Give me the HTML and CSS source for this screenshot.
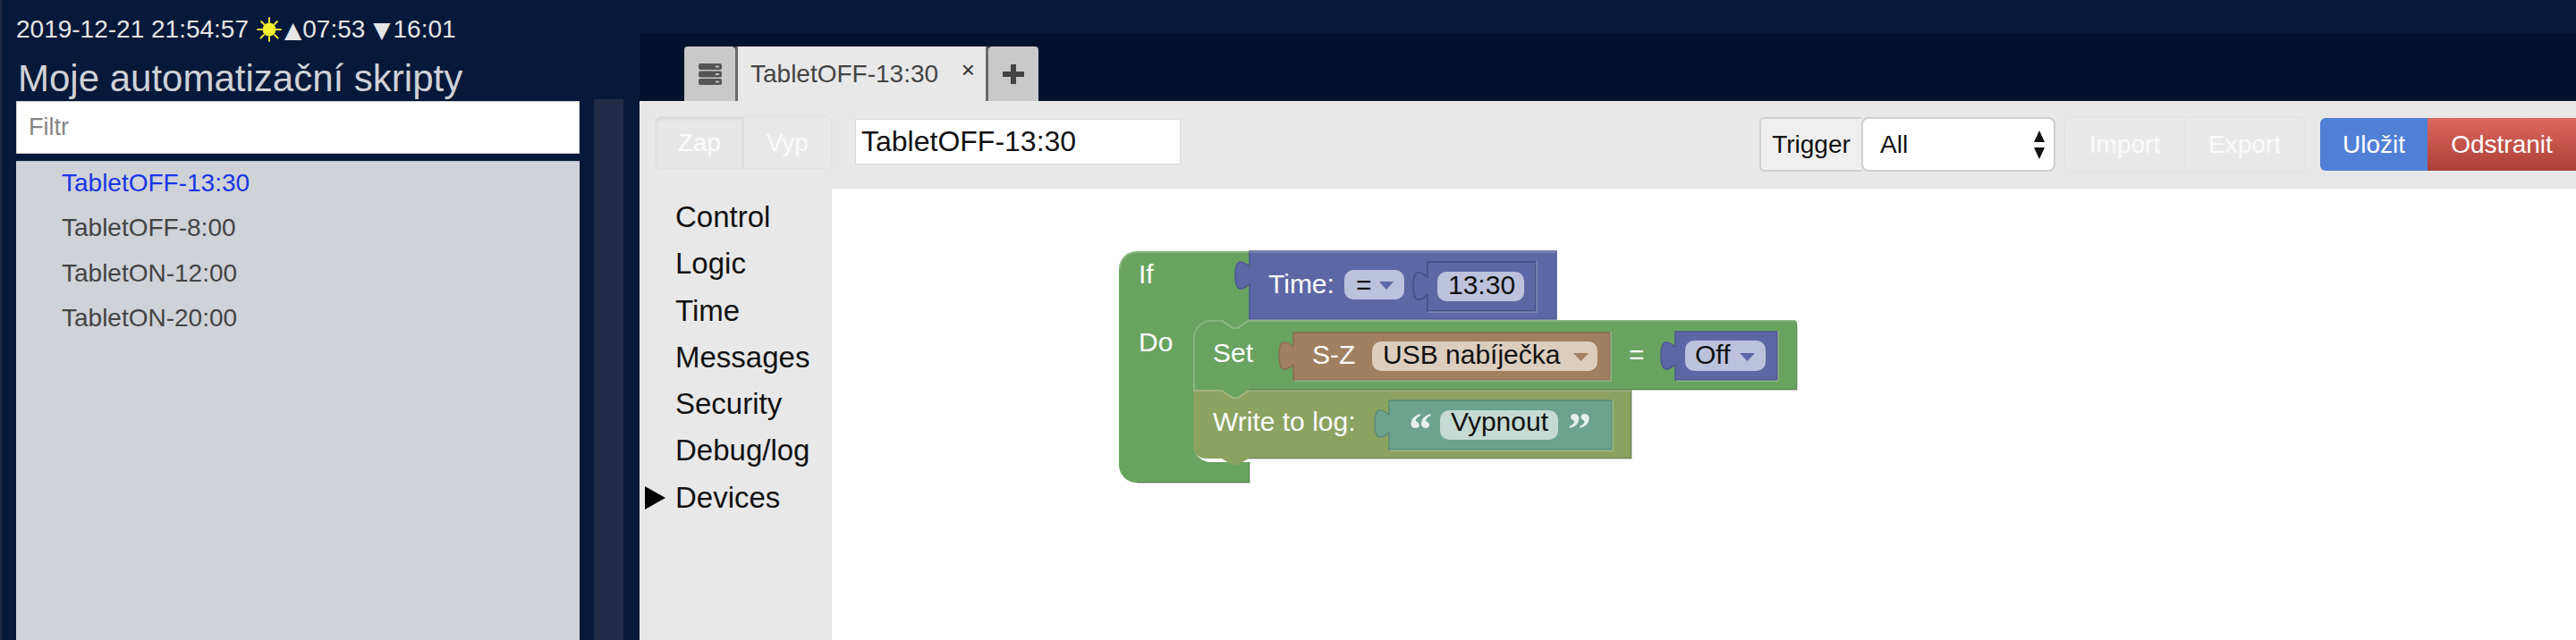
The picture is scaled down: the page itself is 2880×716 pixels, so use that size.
FILE: index.html
```html
<!DOCTYPE html>
<html lang="cs">
<head>
  <meta charset="UTF-8">
  <title>Moje automatizační skripty</title>
  <link rel="stylesheet" href="styles.css">
</head>
<body>
  <div class="app">
    <aside class="sidebar">
      <div class="status">
        <span>2019-12-21 21:54:57</span>
        <svg class="sun" width="28" height="28" viewBox="0 0 28 28">
          <g stroke="#e8e23a" stroke-width="2" stroke-linecap="round">
            <path d="M14 1v5M14 22v5M1 14h5M22 14h5M5 5l3.500 3.500M20 20l3.500 3.500M23 5l-3.500 3.500M8 20l-3.500 3.500"/>
          </g>
          <circle cx="14" cy="14" r="7.500" fill="#f4f02e"/>
        </svg>
        <span class="arrow">▲</span><span>07:53</span>
        <span class="arrow arrow-down">▼</span><span>16:01</span>
      </div>
      <h1 class="title">Moje automatizační skripty</h1>
      <input class="filter" type="text" placeholder="Filtr">
      <ul class="script-list">
        <li class="active">TabletOFF-13:30</li>
        <li>TabletOFF-8:00</li>
        <li>TabletON-12:00</li>
        <li>TabletON-20:00</li>
      </ul>
    </aside>

    <div class="splitter"></div>

    <main class="editor">
      <div class="tabs">
        <div class="tab tab-icon">
          <svg width="26" height="24" viewBox="0 0 26 24">
            <g fill="#555">
              <rect x="0" y="0" width="26" height="7" rx="2"/>
              <rect x="0" y="8.500" width="26" height="7" rx="2"/>
              <rect x="0" y="17" width="26" height="7" rx="2"/>
            </g>
            <g fill="#bbb">
              <rect x="19" y="2.500" width="4" height="2"/>
              <rect x="19" y="11" width="4" height="2"/>
              <rect x="19" y="19.500" width="4" height="2"/>
            </g>
          </svg>
        </div>
        <div class="tab tab-active">
          <span>TabletOFF-13:30</span>
          <span class="tab-close">×</span>
        </div>
        <div class="tab tab-add">
          <svg width="24" height="22" viewBox="0 0 24 22">
            <path d="M9 0h6v8h9v6h-9v8H9v-8H0V8h9z" fill="#444"/>
          </svg>
        </div>
      </div>

      <div class="panel">
        <div class="toolbar">
          <div class="btn-group onoff">
            <div class="btn-flat btn-zap">Zap</div>
            <div class="btn-flat">Vyp</div>
          </div>
          <input class="script-name" type="text" value="TabletOFF-13:30">
          <div class="toolbar-right">
            <div class="trigger">
              <div class="trigger-label">Trigger</div>
              <div class="trigger-select">
                <span>All</span>
                <svg width="12" height="32" viewBox="0 0 12 32">
                  <path d="M6 0l6 13H0zM0 19h12L6 32z" fill="#111"/>
                </svg>
              </div>
            </div>
            <div class="btn-group import-export">
              <div class="btn-flat btn-import">Import</div>
              <div class="btn-flat">Export</div>
            </div>
            <div class="actions">
              <div class="btn-save">Uložit</div>
              <div class="btn-delete">Odstranit</div>
            </div>
          </div>
        </div>

        <div class="panel-body">
          <ul class="toolbox">
            <li>Control</li>
            <li>Logic</li>
            <li>Time</li>
            <li>Messages</li>
            <li>Security</li>
            <li>Debug/log</li>
            <li class="open">Devices</li>
          </ul>
          <div class="workspace">
            <svg class="blocks" width="1950" height="506" viewBox="930 210 1950 506">
              <!-- if / do -->
              <path class="b-green" d="M1251 301a20 20 0 0 1 20-20H1397V358H1396l-12 8h-6l-12-8V380H1334V497a20 20 0 0 0 20 20H1397V540H1271a20 20 0 0 1-20-20Z"/>
              <path class="edge-light" d="M1252 301a19 19 0 0 1 19-19H1397"/>
              <path class="edge-dark" d="M1397 517V540H1271"/>
              <text class="lbl" x="1273" y="317">If</text>
              <text class="lbl" x="1273" y="393">Do</text>

              <!-- time compare -->
              <path class="b-blue" d="M1397 281H1740V357H1397V318c-3 2-7 6-11 5c-4-1-5-8-5-15s1-14 5-15c4-1 8 3 11 5V281Z"/>
              <path class="edge-light" d="M1397 282H1739"/>
              <text class="lbl" x="1418" y="328">Time:</text>
              <rect class="pill-blue" x="1503" y="302" width="67" height="33" rx="10"/>
              <text class="val" x="1516" y="329">=</text>
              <path class="tri-blue" d="M1542 315h16l-8 9z"/>
              <path class="b-blue inset" d="M1596 293H1717V348H1596V330c-3 2-7 6-11 5c-4-1-5-8-5-15s1-14 5-15c4-1 8 3 11 5V293Z"/>
              <path class="edge-light" d="M1718 292V349H1597"/>
              <rect class="pill-blue" x="1607" y="304" width="97" height="33" rx="10"/>
              <text class="val" x="1619" y="329">13:30</text>

              <!-- write to log, under the set block's bottom notch -->
              <path class="b-olive" d="M1334 436H1824V513H1396l-12 7h-6l-12-7H1348a14 14 0 0 1-14-14Z"/>
              <path class="edge-dark" d="M1824 436V513H1396"/>
              <text class="lbl" x="1356" y="482">Write to log:</text>
              <path class="b-teal" d="M1553 448H1802V503H1553V484c-3 2-7 6-11 5c-4-1-5-8-5-15s1-14 5-15c4-1 8 3 11 5V448Z"/>
              <path class="edge-light" d="M1803 447V504H1554"/>
              <text class="quote" x="1575" y="498">“</text>
              <rect class="pill-teal" x="1610" y="459" width="132" height="33" rx="10"/>
              <text class="val" x="1622" y="482">Vypnout</text>
              <text class="quote" x="1753" y="498">”</text>

              <!-- set -->
              <path class="b-green" d="M1354 358H1366l12 8h6l12-8H2005a4 4 0 0 1 4 4V436H1396l-12 8h-6l-12-8H1334V378a20 20 0 0 1 20-20Z"/>
              <path class="edge-light" d="M1335 436V378a19 19 0 0 1 19-19H1366l12 8h6l12-8H2005"/>
              <path class="edge-dark" d="M2009 362V436H1396"/>
              <path class="edge-light" d="M1334 437H1366l12 8h6l12-8H1824"/>
              <text class="lbl" x="1356" y="405">Set</text>
              <path class="b-brown" d="M1446 372H1800V425H1446V408c-3 2-7 6-11 5c-4-1-5-8-5-15s1-14 5-15c4-1 8 3 11 5V372Z"/>
              <path class="edge-light" d="M1801 371V426H1447"/>
              <text class="lbl" x="1467" y="407">S-Z</text>
              <rect class="pill-brown" x="1534" y="382" width="252" height="33" rx="10"/>
              <text class="val" x="1546" y="407">USB nabíječka</text>
              <path class="tri-brown" d="M1759 395h17l-8.500 9z"/>
              <text class="lbl" x="1821" y="407">=</text>
              <path class="b-blue" d="M1873 371H1987V425H1873V408c-3 2-7 6-11 5c-4-1-5-8-5-15s1-14 5-15c4-1 8 3 11 5V371Z"/>
              <path class="edge-light" d="M1988 370V426H1874"/>
              <rect class="pill-blue" x="1884" y="381" width="90" height="34" rx="10"/>
              <text class="val" x="1895" y="407">Off</text>
              <path class="tri-blue" d="M1945 395h17l-8.500 9z"/>
            </svg>
          </div>
        </div>
      </div>
    </main>
  </div>
</body>
</html>
```

FILE: styles.css
```css
* {
  box-sizing: border-box;
}

html, body {
  margin: 0;
  padding: 0;
  height: 716px;
  overflow: hidden;
}

body {
  font-family: "Liberation Sans", Arial, sans-serif;
  font-size: 28px;
  background-color: #07193a;
}

.app {
  display: flex;
  height: 716px;
}

/* left column */
.sidebar {
  width: 664px;
  flex: none;
  padding-left: 16px;
  padding-right: 16px;
  border-left: 2px solid #1f2c47;
  display: flex;
  flex-direction: column;
}

.status {
  height: 66px;
  display: flex;
  align-items: center;
  color: #e6e6e6;
  white-space: pre;
}

.sun {
  margin: 0 3px 0 9px;
}

.arrow {
  font-family: "DejaVu Sans", sans-serif;
  font-size: 25px;
  margin-right: 1px;
}

.arrow-down {
  margin-left: 9px;
  margin-right: 3px;
}

.title {
  height: 47px;
  margin: 0;
  padding-left: 2px;
  font-size: 42px;
  line-height: 44px;
  font-weight: normal;
  color: #cfd2d7;
  white-space: nowrap;
}

.filter {
  width: 630px;
  height: 59px;
  flex: none;
  padding: 0 13px;
  border: 1px solid #cfcfcf;
  background-color: #fff;
  font-family: inherit;
  font-size: 27px;
  outline: none;
}

.filter::placeholder {
  color: #858585;
}

.script-list {
  flex: 1;
  width: 630px;
  margin: 8px 0 0;
  padding: 0;
  list-style: none;
  background-color: #cfd2d7;
  border-top: 1px solid #b9bcc2;
}

.script-list li {
  height: 50.4px;
  line-height: 48px;
  padding-left: 51px;
  color: #444;
}

.script-list li.active {
  color: #1a35e8;
}

.splitter {
  width: 33px;
  flex: none;
  margin-top: 111px;
  background-color: #212d48;
}

/* right column */
.editor {
  flex: 1;
  margin: 37px 0 0 18px;
  min-width: 0;
  display: flex;
  flex-direction: column;
  background-color: #03132e;
}

.tabs {
  display: flex;
  height: 76px;
  padding: 15px 0 0 50px;
}

.tab {
  display: flex;
  align-items: center;
  justify-content: center;
  height: 61px;
  border-radius: 4px 4px 0 0;
  background-color: #c9c9c9;
}

.tab-icon {
  width: 57px;
}

.tab-active {
  width: 283px;
  justify-content: space-between;
  padding: 0 12px 0 14px;
  border-left: 3px solid #6a6a6a;
  border-right: 3px solid #6a6a6a;
  border-radius: 0;
  background-color: #e8e8e8;
  color: #444;
}

.tab-close {
  font-size: 26px;
  margin-top: -8px;
  color: #333;
}

.tab-add {
  width: 56px;
}

.panel {
  flex: 1;
  display: flex;
  flex-direction: column;
  background-color: #e8e8e8;
  overflow: hidden;
}

.toolbar {
  display: flex;
  align-items: flex-start;
  height: 97px;
  padding: 18px 0 0 18px;
}

.btn-group {
  display: flex;
  border-radius: 6px;
  box-shadow: 0 0 3px rgba(0, 0, 0, 0.08);
  background-color: #e9e9e9;
}

.btn-flat {
  display: flex;
  align-items: center;
  justify-content: center;
  color: #fafafa;
}

.onoff {
  width: 196px;
  height: 57px;
}

.onoff .btn-flat {
  flex: 1;
}

.btn-zap {
  border-right: 1px solid #dcdcdc;
  border-radius: 6px 0 0 6px;
  background-color: #e7e7e7;
  box-shadow: inset 0 2px 4px rgba(0, 0, 0, 0.08);
}

.script-name {
  width: 364px;
  height: 51px;
  margin: 2px 0 0 27px;
  padding: 0 6px;
  border: 1px solid #dadada;
  background-color: #fff;
  color: #111;
  font-family: inherit;
  font-size: 32px;
  outline: none;
}

.toolbar-right {
  display: flex;
  margin-left: auto;
  align-items: flex-start;
}

.trigger {
  display: flex;
  height: 61px;
}

.trigger-label {
  width: 114px;
  display: flex;
  align-items: center;
  justify-content: center;
  border: 2px solid #cfcfcf;
  border-right: none;
  border-radius: 6px 0 0 6px;
  background-color: #efefef;
  color: #111;
}

.trigger-select {
  width: 217px;
  display: flex;
  align-items: center;
  justify-content: space-between;
  padding: 0 10px 0 19px;
  border: 2px solid #cfcfcf;
  border-radius: 8px;
  background-color: #fff;
  color: #111;
}

.import-export {
  width: 267px;
  height: 59px;
  margin: 1px 0 0 11px;
}

.import-export .btn-flat {
  flex: 1;
}

.btn-import {
  border-right: 1px solid #e2e2e2;
}

.actions {
  display: flex;
  height: 59px;
  margin: 1px 0 0 18px;
  color: #fff;
}

.btn-save {
  width: 120px;
  display: flex;
  align-items: center;
  justify-content: center;
  border-radius: 6px 0 0 6px;
  background-color: #5080d6;
}

.btn-delete {
  width: 166px;
  display: flex;
  align-items: center;
  justify-content: center;
  background: linear-gradient(#dd6860, #ad3f36);
}

.panel-body {
  flex: 1;
  display: flex;
  min-height: 0;
}

.toolbox {
  width: 215px;
  flex: none;
  margin: 0;
  padding: 7px 0 0 40px;
  list-style: none;
  font-size: 33px;
  color: #111;
}

.toolbox li {
  position: relative;
  height: 52.3px;
  line-height: 52px;
}

.toolbox li.open::before {
  content: "";
  position: absolute;
  left: -34px;
  top: 13px;
  border-left: 23px solid #000;
  border-top: 13px solid transparent;
  border-bottom: 13px solid transparent;
}

.workspace {
  flex: 1;
  background-color: #fff;
  border-top: 1px solid #d4d4d4;
  overflow: hidden;
}

.blocks {
  display: block;
  margin-top: -1px;
}

/* blockly pieces */
.b-green {
  fill: #69a360;
}

.b-blue {
  fill: #5c68a5;
  stroke: #4c5890;
  stroke-width: 1.500;
}

.b-blue.inset {
  stroke: #47528a;
  stroke-width: 2;
}

.b-brown {
  fill: #a08060;
  stroke: #8a6e52;
  stroke-width: 1.500;
}

.b-olive {
  fill: #8ba261;
}

.b-teal {
  fill: #6ca28e;
  stroke: #568a77;
  stroke-width: 1.500;
}

.edge-light {
  fill: none;
  stroke: rgba(255, 255, 255, 0.2);
  stroke-width: 2;
}

.edge-dark {
  fill: none;
  stroke: rgba(0, 0, 0, 0.18);
  stroke-width: 2;
}

.pill-blue {
  fill: #bdc2dc;
}

.pill-brown {
  fill: #dccdbd;
}

.pill-teal {
  fill: #c4dad2;
}

.tri-blue {
  fill: #5c68a5;
}

.tri-brown {
  fill: #a08060;
}

.lbl {
  font-size: 30px;
  fill: #fff;
}

.val {
  font-size: 30px;
  fill: #111;
}

.quote {
  font-family: "Liberation Serif", serif;
  font-weight: bold;
  font-size: 52px;
  fill: #e8f0ed;
}
```
